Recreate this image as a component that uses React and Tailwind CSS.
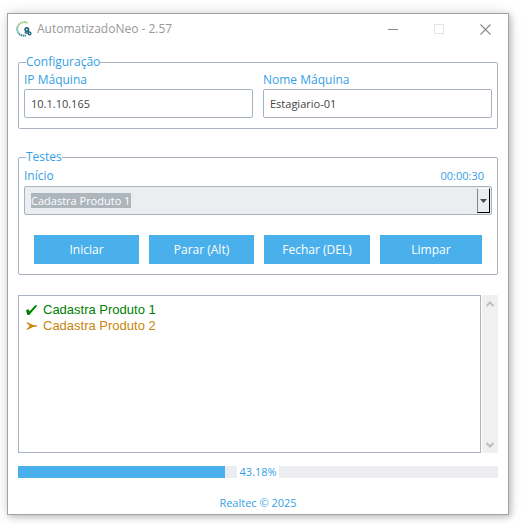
const results = [
  { text: 'Cadastra Produto 1', state: 'done' },
  { text: 'Cadastra Produto 2', state: 'running' },
];

function AppIcon() {
  return (
    <svg viewBox="0 0 16 16" className="size-4 shrink-0" aria-hidden="true">
      <path d="M11.5 2A6.8 6.8 0 0 0 1.6 6" fill="none" stroke="#9bcb8b" strokeWidth="2" strokeDasharray="1.6 .5" />
      <path d="M1.4 6.2A6.8 6.8 0 0 0 3 12.6" fill="none" stroke="#6fb5a0" strokeWidth="2" strokeDasharray="1.6 .5" />
      <path d="M3 12.6A6.8 6.8 0 0 0 10 14.4" fill="none" stroke="#4a919f" strokeWidth="2" strokeDasharray="1.6 .5" />
      <circle cx="10.8" cy="8.6" r="1.7" fill="none" stroke="#1f6580" strokeWidth="1.7" />
      <circle cx="13.6" cy="12.4" r="1.3" fill="none" stroke="#1f6580" strokeWidth="1.4" />
      <path d="M8.6 11.6l3.4 .6M12 9.8l1.4 1.6" stroke="#1f6580" strokeWidth="1.4" />
    </svg>
  );
}

function TitleBar() {
  return (
    <header className="flex h-[30px] items-center pl-2 text-[#999]">
      <AppIcon />
      <h1 className="ml-[5px] grow">AutomatizadoNeo - 2.57</h1>
      <button type="button" aria-label="Minimizar" className="flex w-[46px] justify-center">
        <svg viewBox="0 0 10 10" className="size-[10px]" stroke="#888" shapeRendering="crispEdges"><path d="M0 5.5h10" /></svg>
      </button>
      <button type="button" aria-label="Maximizar" disabled className="flex w-[46px] justify-center">
        <svg viewBox="0 0 10 10" className="size-[10px]" fill="none" stroke="#e5e5e5" shapeRendering="crispEdges"><path d="M.5.5h9v9h-9z" /></svg>
      </button>
      <button type="button" aria-label="Fechar janela" className="flex w-[46px] justify-center">
        <svg viewBox="0 0 11 11" className="size-[11px]" stroke="#888" strokeWidth="1.1"><path d="M.5.5l10 10M10.5.5l-10 10" /></svg>
      </button>
    </header>
  );
}

function Field({ id, label, value }) {
  return (
    <div className="flex min-w-0 flex-1 flex-col">
      <label htmlFor={id}>{label}</label>
      <input id={id} defaultValue={value} className="mt-px h-[29px] w-full rounded-[2px] border border-[#a9b3bf] bg-white px-[6px] text-[11px] text-[#444] outline-none" />
    </div>
  );
}

function ScrollBar() {
  return (
    <div className="ml-px flex w-4 flex-col items-center justify-between bg-[#f0f0f0]">
      <button type="button" aria-label="Rolar para cima" className="flex h-[18px] items-center">
        <svg viewBox="0 0 8 6" className="h-[6px] w-2" fill="none" stroke="#bfbfbf" strokeWidth="2"><path d="M.5 5L4 1.5 7.5 5" /></svg>
      </button>
      <button type="button" aria-label="Rolar para baixo" className="flex h-[16px] items-center">
        <svg viewBox="0 0 8 6" className="h-[6px] w-2" fill="none" stroke="#bfbfbf" strokeWidth="2"><path d="M.5 1L4 4.5 7.5 1" /></svg>
      </button>
    </div>
  );
}

const actionClass = 'h-[29px] bg-[#4ab0eb] text-white';

export default function App() {
  return (
    <div className="bg-white pt-[13px] pr-[14px] pb-[10px] pl-[7px] font-['Open_Sans','Noto_Sans',sans-serif] text-[12px] leading-[16px] text-[#349fe5]">
      <main className="border border-[#a3a3a3] bg-white shadow-[2px_2px_6px_rgba(0,0,0,0.22),0_0_14px_rgba(0,0,0,0.12)]">
        <TitleBar />
        <div className="px-[10px] pt-[10px] pb-[3px]">
          <fieldset className="rounded-[2px] border border-[#a9b3bf] px-[5px] pt-[2px] pb-[10px]">
            <legend className="ml-[2px]">Configuração</legend>
            <div className="flex gap-[10px]">
              <Field id="ip" label="IP Máquina" value="10.1.10.165" />
              <Field id="nome" label="Nome Máquina" value="Estagiario-01" />
            </div>
          </fieldset>

          <fieldset className="mt-5 rounded-[2px] border border-[#a9b3bf] px-[5px] pt-[3px] pb-[10px]">
            <legend className="ml-[2px]">Testes</legend>
            <div className="flex justify-between pr-[8px]">
              <label htmlFor="inicio">Início</label>
              <time className="text-[11px]">00:00:30</time>
            </div>
            <div className="mt-[2px] flex h-[29px] items-center rounded-[2px] border border-[#a9b3bf] bg-[#ebedf1] pr-px pl-[6px]">
              <select id="inicio" defaultValue="1" className="h-[15px] appearance-none bg-[#adb5bd] text-[11px] leading-[15px] text-white outline-none">
                <option value="1">Cadastra Produto 1</option>
                <option value="2">Cadastra Produto 2</option>
              </select>
              <button type="button" aria-label="Abrir lista" className="ml-auto flex h-[25px] w-[13px] items-center justify-center border-t border-r border-b border-l border-t-white border-r-black border-b-black border-l-[#888]">
                <svg viewBox="0 0 7 4" className="h-1 w-[7px]" fill="#454c57"><path d="M0 0h7L3.5 4z" /></svg>
              </button>
            </div>
            <div className="mt-5 flex gap-[10px] px-[10px]">
              <button type="button" className={`flex-[105] ${actionClass}`}>Iniciar</button>
              <button type="button" className={`flex-[105] ${actionClass}`}>Parar (Alt)</button>
              <button type="button" className={`flex-[106] ${actionClass}`}>Fechar (DEL)</button>
              <button type="button" className={`flex-[102] ${actionClass}`}>Limpar</button>
            </div>
          </fieldset>

          <div className="mt-5 flex h-[158px]">
            <ul className="grow border border-[#a9b3bf] px-[7px] pt-[6px] font-['Liberation_Sans',Arial,sans-serif] text-[13px]">
              {results.map(({ text, state }) => (
                <li key={text} className={state === 'done' ? 'flex items-center text-[#008000]' : 'flex items-center text-[#c8860d]'}>
                  {state === 'done' ? (
                    <svg viewBox="0 0 11 10" className="mr-[6px] h-[10px] w-[11px]" fill="currentColor"><path d="M0 5.5L1 4.6 2.6 4.4 3.8 6.2 8.6 .8 11 0 11 1 5.4 7.6 3.4 10H1.4z" /></svg>
                  ) : (
                    <svg viewBox="0 0 11 8" className="mr-[6px] h-2 w-[11px]" fill="currentColor"><path d="M0 .3L2 .5 7 3 11 3.5V4.5L7 5 2 7.5 0 7.7 3.4 4.6 3.4 3.4z" /></svg>
                  )}
                  {text}
                </li>
              ))}
            </ul>
            <ScrollBar />
          </div>

          <div className="mt-[11px] grid items-center">
            <div role="progressbar" aria-label="Progresso" aria-valuenow={43.18} className="col-start-1 row-start-1 h-3 bg-[#ebedf1]">
              <div className="h-full bg-[#4ab0eb]" style={{ width: '43.18%' }} />
            </div>
            <span className="col-start-1 row-start-1 justify-self-center bg-white px-[2px] text-[11px]">43.18%</span>
          </div>
          <footer className="mt-[15px] text-center text-[11px]">Realtec © 2025</footer>
        </div>
      </main>
    </div>
  );
}
